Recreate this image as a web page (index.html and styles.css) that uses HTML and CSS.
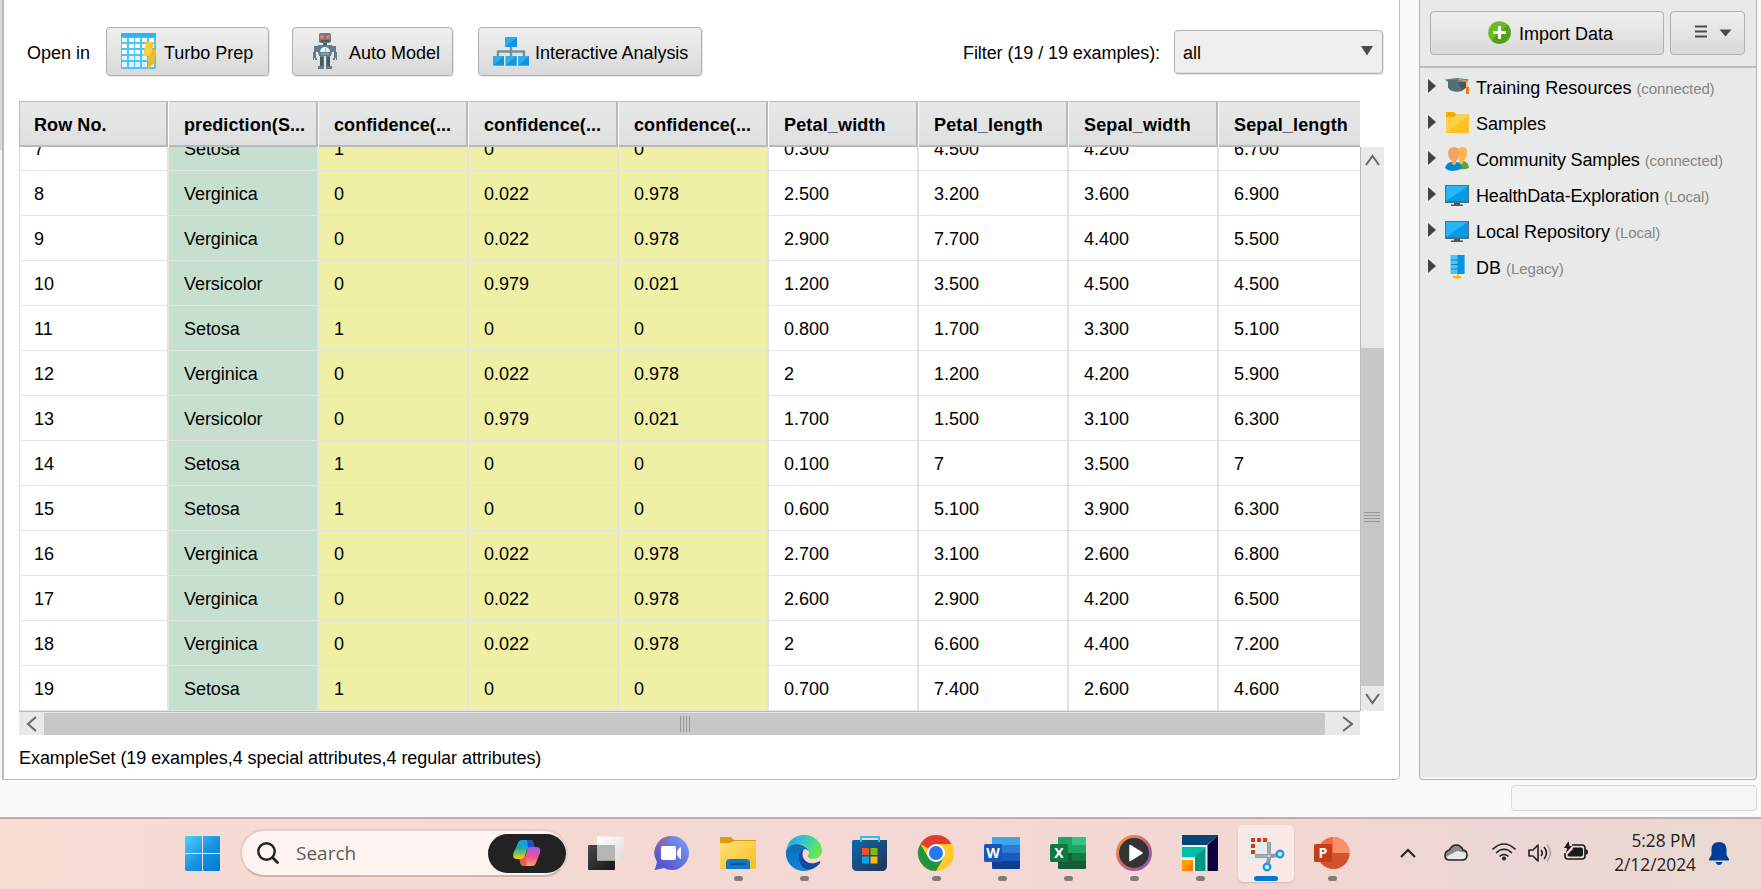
FILE: index.html
```html
<!DOCTYPE html>
<html lang="en">
<head>
<meta charset="utf-8">
<title>ExampleSet</title>
<link rel="stylesheet" href="styles.css">
</head>
<body>
<div class="screen">
  <div class="workspace">
    <div class="edge"><i class="edge-thumb"></i></div>
    <main class="results">
      <div class="toolbar">
        <span class="open-in">Open in</span>
        <button class="btn turbo">
          <svg width="36" height="37" viewBox="0 0 36 37"><rect width="35" height="36" fill="#4fc3f7"/><rect width="35" height="4.500" fill="#29b6f6"/><g fill="#fff"><path d="M1 5h5v4H1zM8 5h5v4H8zM14 5h5v4h-5zM21 5h5v4h-5zM28 5h5v4h-5zM1 11h5v4H1zM8 11h5v4H8zM14 11h5v4h-5zM21 11h5v4h-5zM28 11h5v4h-5zM1 17h5v4H1zM8 17h5v4H8zM14 17h5v4h-5zM21 17h5v4h-5zM28 17h5v4h-5z"/></g><g fill="#e1f5fe"><path d="M1 23h5v4H1zM8 23h5v4H8zM14 23h5v4h-5zM21 23h5v4h-5zM28 23h5v4h-5zM1 29h5v5H1zM8 29h5v5H8zM14 29h5v5h-5zM21 29h5v5h-5zM28 29h5v5h-5z"/></g><path d="M25 9h8l-2 8h4l-2 12h1l-7 7 1-8h-2l2-5h-6z" fill="#fdd02f"/><path d="M31 17h4l-2 12h1l-7 7 1-8h-2z" fill="#fbb11c" opacity=".8"/></svg>
          <span>Turbo Prep</span>
        </button>
        <button class="btn auto">
          <svg width="24" height="37" viewBox="0 0 24 37"><g fill="#607d8b"><rect x="6" y="0" width="12" height="10" rx="2"/><rect x="10" y="9" width="4" height="4"/><path d="M5 12h14l1 3-2 8H6L4 15z"/><path d="M1 13h4v6H1zM19 13h4v6h-4zM0 19h3v6H0zM21 19h3v6h-3zM0 25h1v2H0zM2 25h2v2H2zM20 25h2v2h-2zM23 25h1v2h-1z"/><path d="M7 23h4v10H7zM13 23h4v10h-4zM5 33h6v3H5zM13 33h6v3h-6z"/></g><path d="M7 24h3v9H7zM14 24h3v9h-3zM10 10h4v2h-4z" fill="#455a64"/><circle cx="9" cy="4" r="2.200" fill="#ff7043"/><circle cx="15" cy="4" r="2.200" fill="#ff7043"/><path d="M8 8h8" stroke="#37474f" stroke-width="1.200"/><path d="M7 19a5 5 0 0 1 10 0z" fill="#e1f5fe"/><path d="M12 19l1-4" stroke="#ffa000"/><path d="M8 21h8" stroke="#b0bec5"/></svg>
          <span>Auto Model</span>
        </button>
        <button class="btn inter">
          <svg width="36" height="29" viewBox="0 0 36 29"><path d="M18 9v10M5 19v-4.500h26V19" fill="none" stroke="#78909c" stroke-width="2.400"/><g fill="#29b0ec"><path d="M12 0h12v10H12zM0 19h11v9.500H0zM12.500 19h11v9.500h-11zM25 19h11v9.500H25z"/></g><g fill="#1593dc"><path d="M24 0v10H12zM11 19v9.500H0zM23.500 19v9.500h-11zM36 19v9.500H25z"/></g></svg>
          <span>Interactive Analysis</span>
        </button>
        <span class="filter-label">Filter (19 / 19 examples):</span>
        <div class="select"><span>all</span><svg width="12" height="10" viewBox="0 0 12 10"><path d="M0 0h12L6 9.500z" fill="#4a4a4a"/></svg></div>
      </div>
      <div class="grid">
        <table class="head"><tr><th>Row No.</th><th>prediction(S...</th><th>confidence(...</th><th>confidence(...</th><th>confidence(...</th><th>Petal_width</th><th>Petal_length</th><th>Sepal_width</th><th>Sepal_length</th></tr></table>
        <div class="viewport">
          <table class="rows">
            <tr><td>7</td><td>Setosa</td><td>1</td><td>0</td><td>0</td><td>0.300</td><td>4.500</td><td>4.200</td><td>6.700</td></tr>
            <tr><td>8</td><td>Verginica</td><td>0</td><td>0.022</td><td>0.978</td><td>2.500</td><td>3.200</td><td>3.600</td><td>6.900</td></tr>
            <tr><td>9</td><td>Verginica</td><td>0</td><td>0.022</td><td>0.978</td><td>2.900</td><td>7.700</td><td>4.400</td><td>5.500</td></tr>
            <tr><td>10</td><td>Versicolor</td><td>0</td><td>0.979</td><td>0.021</td><td>1.200</td><td>3.500</td><td>4.500</td><td>4.500</td></tr>
            <tr><td>11</td><td>Setosa</td><td>1</td><td>0</td><td>0</td><td>0.800</td><td>1.700</td><td>3.300</td><td>5.100</td></tr>
            <tr><td>12</td><td>Verginica</td><td>0</td><td>0.022</td><td>0.978</td><td>2</td><td>1.200</td><td>4.200</td><td>5.900</td></tr>
            <tr><td>13</td><td>Versicolor</td><td>0</td><td>0.979</td><td>0.021</td><td>1.700</td><td>1.500</td><td>3.100</td><td>6.300</td></tr>
            <tr><td>14</td><td>Setosa</td><td>1</td><td>0</td><td>0</td><td>0.100</td><td>7</td><td>3.500</td><td>7</td></tr>
            <tr><td>15</td><td>Setosa</td><td>1</td><td>0</td><td>0</td><td>0.600</td><td>5.100</td><td>3.900</td><td>6.300</td></tr>
            <tr><td>16</td><td>Verginica</td><td>0</td><td>0.022</td><td>0.978</td><td>2.700</td><td>3.100</td><td>2.600</td><td>6.800</td></tr>
            <tr><td>17</td><td>Verginica</td><td>0</td><td>0.022</td><td>0.978</td><td>2.600</td><td>2.900</td><td>4.200</td><td>6.500</td></tr>
            <tr><td>18</td><td>Verginica</td><td>0</td><td>0.022</td><td>0.978</td><td>2</td><td>6.600</td><td>4.400</td><td>7.200</td></tr>
            <tr><td>19</td><td>Setosa</td><td>1</td><td>0</td><td>0</td><td>0.700</td><td>7.400</td><td>2.600</td><td>4.600</td></tr>
          </table>
        </div>
        <div class="vscroll">
          <svg width="23" height="25" viewBox="0 0 23 25"><path d="M5 18l6.500-9 6.500 9" fill="none" stroke="#666" stroke-width="2"/></svg>
          <div class="vthumb"><i></i><i></i><i></i><i></i></div>
          <svg width="23" height="25" viewBox="0 0 23 25"><path d="M5 8l6.500 9L18 8" fill="none" stroke="#666" stroke-width="2"/></svg>
        </div>
        <div class="hscroll">
          <svg width="25" height="22" viewBox="0 0 25 22"><path d="M17 4L9 11l8 7" fill="none" stroke="#666" stroke-width="2"/></svg>
          <div class="hthumb"><i></i><i></i><i></i><i></i></div>
          <svg width="35" height="22" viewBox="0 0 35 22"><path d="M18 4l9 7-9 7" fill="none" stroke="#666" stroke-width="2"/></svg>
        </div>
      </div>
      <div class="summary">ExampleSet (19 examples,4 special attributes,4 regular attributes)</div>
    </main>
    <aside class="repo">
      <div class="repo-tools">
        <button class="btn import">
          <svg width="23" height="23" viewBox="0 0 23 23"><circle cx="11.500" cy="11.500" r="11.300" fill="#68bb20"/><path d="M19.500 3.500a11.300 11.300 0 0 1-16 16z" fill="#4fa318"/><path d="M11.500 5v13M5 11.500h13" stroke="#fff" stroke-width="3"/></svg>
          <span>Import Data</span>
        </button>
        <button class="btn menu">
          <svg width="37" height="13" viewBox="0 0 37 13"><path d="M0 1.500h12M0 6.500h12M0 11.500h12" stroke="#4a4a4a" stroke-width="2"/><path d="M24.500 4.500h12l-6 7z" fill="#4a4a4a"/></svg>
        </button>
      </div>
      <ul class="tree">
        <li><b></b><svg width="24" height="24" viewBox="0 0 24 24"><path d="M0 4.500L12 3l12 1.500-2 2H2z" fill="#607d8b"/><path d="M3 6.500h18v6q-3 4-9 4t-9-4z" fill="#455a64"/><path d="M3 5h9l5 11q-12 2-14-4z" fill="#546e7a"/><path d="M14 4.500l8 1.500v7" fill="none" stroke="#f0a050" stroke-width="1.200"/><path d="M21 12h3v7h-3z" fill="#f57c00"/></svg><span>Training Resources</span><em>(connected)</em></li>
        <li><b></b><svg width="24" height="24" viewBox="0 0 24 24"><path d="M1 1h8l2 2.500h13V8H1z" fill="#ffa800"/><path d="M1 6h8l2-2h13v18H1z" fill="#ffca28"/><path d="M24 4v18H1z" fill="#ffc31f"/><path d="M1 22L24 4H11L9 6H1z" fill="#ffd149"/></svg><span>Samples</span></li>
        <li><b></b><svg width="24" height="24" viewBox="0 0 24 24"><path d="M9 22q0-6 6-7l3-1q6 1 6 7-4 2-12 1z" fill="#689f38"/><path d="M12 3q2-3 6-3 5 0 4 8-1 5-4 6v3h-3z" fill="#ffb74d"/><path d="M0 21q1-5 6-6h5q5 1 6 6-4 3-9 3t-8-3z" fill="#0288d1"/><path d="M3 6q0-6 6-6t5 7q0 5-3 7v3q-2 2-4 0v-3Q3 11 3 6z" fill="#f4a460"/></svg><span class="tight">Community Samples</span><em>(connected)</em></li>
        <li><b></b><svg width="24" height="24" viewBox="0 0 24 24"><path d="M0 2h24v18H0z" fill="#546e7a"/><path d="M1 3h22v15H1z" fill="#039be5"/><path d="M1 3h22L1 18z" fill="#29b6f6"/><path d="M9 20h6v1.500h3V23H6v-1.500h3z" fill="#455a64"/></svg><span class="tight">HealthData-Exploration</span><em>(Local)</em></li>
        <li><b></b><svg width="24" height="24" viewBox="0 0 24 24"><path d="M0 2h24v18H0z" fill="#546e7a"/><path d="M1 3h22v15H1z" fill="#039be5"/><path d="M1 3h22L1 18z" fill="#29b6f6"/><path d="M9 20h6v1.500h3V23H6v-1.500h3z" fill="#455a64"/></svg><span>Local Repository</span><em>(Local)</em></li>
        <li><b></b><svg width="24" height="24" viewBox="0 0 24 24"><path d="M5.500 0h14v19h-14z" fill="#4fc3f7"/><path d="M12.500 0h7v19h-7z" fill="#0595e2"/><path d="M6 5h7M6 9.500h7M6 14h7" stroke="#0288d1"/><path d="M12 19h1.500v2H17l-2 2.500h-4.500L7.500 22v-1H12z" fill="#ffb300"/></svg><span>DB</span><em>(Legacy)</em></li>
      </ul>
    </aside>
  </div>
  <div class="statusbar"><div class="status-box"></div></div>

  <footer class="taskbar">
    <svg class="start" width="35" height="35" viewBox="0 0 35 35"><defs><linearGradient id="win" x1="0" y1="0" x2="35" y2="35" gradientUnits="userSpaceOnUse"><stop stop-color="#4dd0ff"/><stop offset=".5" stop-color="#1a95e0"/><stop offset="1" stop-color="#0078d4"/></linearGradient></defs><path d="M1 0h16v17H0V1zM18 0h16l1 1v16H18zM0 18h17v17H1l-1-1zM18 18h17v16l-1 1H18z" fill="url(#win)"/></svg>
    <div class="search">
      <svg width="22" height="22" viewBox="0 0 22 22"><circle cx="9.500" cy="9.500" r="8.200" fill="none" stroke="#222" stroke-width="2.400"/><path d="M15.500 15.500l5 5" stroke="#222" stroke-width="2.800" stroke-linecap="round"/></svg>
      <span>Search</span>
      <div class="copilot"><svg width="28" height="26" viewBox="0 0 28 26"><defs><linearGradient id="cpa" x1="0" y1="0" x2="0" y2="1"><stop stop-color="#159cf0"/><stop offset=".4" stop-color="#1aa5b8"/><stop offset=".75" stop-color="#8dc63f"/><stop offset="1" stop-color="#ffd000"/></linearGradient><linearGradient id="cpb" x1="0" y1="0" x2="0" y2="1"><stop stop-color="#9b5cf6"/><stop offset=".5" stop-color="#ee5090"/><stop offset="1" stop-color="#ffa35c"/></linearGradient></defs><path d="M9 0h8q3 0 3.500 3l1 4h-3q-4 0-5 4l-2 6q-.700 2-3 2H4q-5 0-3.500-6L5 3q1-3 4-3z" fill="url(#cpa)"/><path d="M14 0h3q3 0 3.500 3l1 4h-3q-2 0-3.500 1z" fill="#1d4fd8"/><path d="M19 26h-8q-3 0-3.500-3l-1-4h2q3 0 4-4l2-6q.700-2 3-2h6q5 0 3.500 6L23 23q-1 3-4 3z" fill="url(#cpb)"/><path d="M14 26h-3q-3 0-3.500-3l-1-4h2q2 0 3.500-2z" fill="#f4584a"/></svg></div>
    </div>
    <nav class="apps">
      <div class="app"><svg width="40" height="40" viewBox="0 0 40 40"><defs><linearGradient id="tk" x1="0" y1="0" x2="1" y2="1"><stop stop-color="#484848"/><stop offset="1" stop-color="#151515"/></linearGradient><linearGradient id="tw" x1="0" y1="0" x2="1" y2="1"><stop stop-color="#fff"/><stop offset="1" stop-color="#dcdcdc"/></linearGradient></defs><rect x="2" y="12" width="27" height="25" rx="1" fill="url(#tk)"/><rect x="11" y="3.500" width="27" height="24" rx="1" fill="url(#tw)"/><path d="M11 12h18v15.500H11z" fill="#b5b5b5"/></svg></div>
      <div class="app"><svg width="40" height="40" viewBox="0 0 40 40"><defs><linearGradient id="ch" x1="0" y1="1" x2="1" y2="0"><stop offset=".2" stop-color="#5558cc"/><stop offset="1" stop-color="#7ea0f5"/></linearGradient><linearGradient id="cv" x1="0" y1="0" x2="0" y2="1"><stop stop-color="#9c6ba8"/><stop offset="1" stop-color="#5558cc" stop-opacity="0"/></linearGradient></defs><path d="M19 3a17 17 0 1 1-7 32l-9 2q-1 0 0-1l2-7A17 17 0 0 1 19 3z" fill="url(#ch)"/><path d="M19 3a17 17 0 0 0-14 26q8-15 14-26z" fill="url(#cv)"/><rect x="9" y="13" width="15" height="14" rx="2" fill="#fff"/><path d="M29 14v12q-4-2-4-6t4-6z" fill="#fff"/></svg></div>
      <div class="app open"><svg width="40" height="40" viewBox="0 0 40 40"><defs><linearGradient id="fo" x1="0" y1="0" x2="1" y2="1"><stop stop-color="#ffe27a"/><stop offset="1" stop-color="#fdbb1e"/></linearGradient></defs><path d="M2 5q0-1 1-1h10l3 3h21q1 0 1 1v6H2z" fill="#dd9a0c"/><path d="M2 10h10l4-2h22v28H2z" fill="url(#fo)"/><path d="M8 36V30q0-4 4-4h16q4 0 4 4v6z" fill="#0f77cc"/><path d="M13 31h14" stroke="#0a4f94" stroke-width="2" stroke-linecap="round"/></svg></div>
      <div class="app open"><svg width="40" height="40" viewBox="0 0 40 40"><defs><linearGradient id="e1" x1="0" y1="0" x2="1" y2=".4"><stop stop-color="#1ba0e8"/><stop offset=".45" stop-color="#2cc3d2"/><stop offset="1" stop-color="#68e650"/></linearGradient><linearGradient id="e2" x1="0" y1="0" x2="0" y2="1"><stop stop-color="#0c6db5"/><stop offset="1" stop-color="#1184dc"/></linearGradient></defs><path d="M2 18C4 7 11 2 20 2c11 0 18 8 18 15 0 6-4 9-9 9-4 0-5-1-5-3s1-2 1-4c0-3-4-8-11-8S3 14 2 18z" fill="url(#e1)"/><path d="M2 18q2-6 10-7c8 0 13 5 13 8-1-4-9-4-9 4 0 8 7 14 15 11l-4 2q-3 2-7 2C9 38 1 29 2 18z" fill="url(#e2)"/><path d="M20 16c-7 3-7 14 1 20 6 3 13-3 15-6 1-2-1-2-2-1-11 5-19-5-14-13z" fill="#0d4d99"/></svg></div>
      <div class="app"><svg width="40" height="40" viewBox="0 0 40 40"><defs><linearGradient id="st" x1="0" y1="0" x2="1" y2="1"><stop stop-color="#0b69ad"/><stop offset="1" stop-color="#272f55"/></linearGradient></defs><path d="M11 10V4h18v6" fill="none" stroke="#28c0f0" stroke-width="2"/><path d="M3 7h34v26q0 5-5 5H7q-5 0-5-5V8z" fill="url(#st)"/><path d="M11 9V4h18v5" fill="none" stroke="#28c0f0" stroke-width="2"/><path d="M12 15h7v7h-7z" fill="#f25022"/><path d="M20.500 15h7v7h-7z" fill="#7fba00"/><path d="M12 23.500h7v7h-7z" fill="#00a4ef"/><path d="M20.500 23.500h7v7h-7z" fill="#ffb900"/></svg></div>
      <div class="app open"><svg width="40" height="40" viewBox="0 0 40 40"><circle cx="20" cy="20" r="18" fill="#ffc928"/><path d="M4.400 11A18 18 0 0 1 35.600 11H20v9z" fill="#e33b2e"/><path d="M4.400 11A18 18 0 0 0 20 38l7.800-13.500L20 20l-7.800 4.500z" fill="#229342"/><circle cx="20" cy="20" r="9" fill="#fff"/><circle cx="20" cy="20" r="7" fill="#2878ec"/></svg></div>
      <div class="app open"><svg width="40" height="40" viewBox="0 0 40 40"><path d="M10 5q0-1 1-1h26q1 0 1 1v7H10z" fill="#41a5ee"/><path d="M10 12h28v8H10z" fill="#2b7cd3"/><path d="M10 20h28v8H10z" fill="#185abd"/><path d="M10 28h28v7q0 1-1 1H11q-1 0-1-1z" fill="#103f91"/><rect x="2" y="11" width="18" height="18" rx="1.500" fill="#1c55b8"/><text x="11" y="25" text-anchor="middle" class="glyph">W</text></svg></div>
      <div class="app open"><svg width="40" height="40" viewBox="0 0 40 40"><path d="M10 5q0-1 1-1h13v16H10z" fill="#21a366"/><path d="M24 4h13q1 0 1 1v7H24z" fill="#33c481"/><path d="M24 12h14v8H24z" fill="#21a366"/><path d="M10 20h14v8H10z" fill="#185c37"/><path d="M24 20h14v8H24z" fill="#107c41"/><path d="M10 28h28v7q0 1-1 1H11q-1 0-1-1z" fill="#185c37"/><rect x="2" y="11" width="18" height="18" rx="1.500" fill="#107840"/><text x="11" y="25" text-anchor="middle" class="glyph">X</text></svg></div>
      <div class="app open"><svg width="40" height="40" viewBox="0 0 40 40"><defs><linearGradient id="mp" x1="0" y1="0" x2="1" y2="1"><stop stop-color="#ff9a3c"/><stop offset=".5" stop-color="#c9686f"/><stop offset="1" stop-color="#8050d0"/></linearGradient></defs><circle cx="20" cy="20" r="18" fill="url(#mp)"/><circle cx="20" cy="20" r="15" fill="#333"/><path d="M16 12.500l12 7.500-12 7.500z" fill="#fff" stroke="#fff" stroke-width="1.500" stroke-linejoin="round"/></svg></div>
      <div class="app open"><svg width="40" height="40" viewBox="0 0 40 40"><path d="M2 2h36v36H2z" fill="#dff5f0"/><path d="M2 2h36L27 12H2z" fill="#034578"/><path d="M38 2v36H27.500V12z" fill="#0f0240"/><path d="M2 14h23l-9 10H2z" fill="#00bfa5"/><path d="M25.500 14v24H15V24z" fill="#009984"/><path d="M2 27h11v11H2z" fill="#ffa000"/><path d="M13 27v11H2z" fill="#ff8500"/></svg></div>
      <div class="app open current"><svg width="40" height="40" viewBox="0 0 40 40"><path d="M2 2h23v26H2z" fill="#e6ebf0"/><g fill="#d83b01"><path d="M5 5h4v4H5zM11 5h4v4h-4zM17 5h4v4h-4zM5 11h4v4H5zM5 17h4v4H5z"/></g><path d="M23 9v17l-1.500 5M9 23h17l5-1" fill="none" stroke="#9299a2" stroke-width="4"/><path d="M23 9v14H9" fill="none" stroke="#b9bec5" stroke-width="1"/><circle cx="23" cy="23" r="1.300" fill="#d5d8dc"/><circle cx="34" cy="21" r="3.300" fill="#f9eae8" stroke="#1e9de6" stroke-width="2.400"/><circle cx="21" cy="34" r="3.300" fill="#f9eae8" stroke="#1e9de6" stroke-width="2.400"/></svg></div>
      <div class="app open"><svg width="40" height="40" viewBox="0 0 40 40"><circle cx="21.500" cy="20" r="16" fill="#ed6c47"/><path d="M21 4a16 16 0 0 1 16.500 16H21z" fill="#ff8f6b"/><path d="M5.500 20h32a16 16 0 0 1-32 0z" fill="#d35230"/><rect x="2" y="11" width="18" height="18" rx="1.500" fill="#c43e1c"/><text x="11" y="25" text-anchor="middle" class="glyph">P</text></svg></div>
    </nav>
    <div class="tray">
      <svg class="t-chev" width="16" height="10" viewBox="0 0 16 10"><path d="M1 9l7-7 7 7" fill="none" stroke="#222" stroke-width="2"/></svg>
      <svg class="t-cloud" width="24" height="17" viewBox="0 0 24 17"><path d="M5.500 16Q1 16 1 11.500 1 7 5.500 6 8 1 12.500 1 17 1 19 6q4 .500 4 5t-4 5z" fill="#e8e8e8"/><path d="M5.500 6Q8 1 12.500 1 17 1 19 6l3.500 3L13 7 2 13Q0 7 5.500 6z" fill="#8c8c8c"/><path d="M5.500 16Q1 16 1 11.500 1 7 5.500 6 8 1 12.500 1 17 1 19 6q4 .500 4 5t-4 5z" fill="none" stroke="#222" stroke-width="1.600"/></svg>
      <svg class="t-wifi" width="24" height="18" viewBox="0 0 24 18"><g fill="none" stroke="#222" stroke-width="1.600"><path d="M.500 6.500q11.500-11 23 0M4 10q8-7.500 16 0M7.500 13.500q4.500-4 9 0"/></g><circle cx="12" cy="15.500" r="2" fill="#222"/></svg>
      <svg class="t-vol" width="24" height="20" viewBox="0 0 24 20"><path d="M1 7h4l5-5v16l-5-5H1z" fill="none" stroke="#222" stroke-width="1.600" stroke-linejoin="round"/><path d="M13 7q2.500 3 0 6M16 4q5 6 0 12" fill="none" stroke="#222" stroke-width="1.600"/><path d="M19 1.500q7 8.500 0 17" fill="none" stroke="#aaa0a0" stroke-width="1.400"/></svg>
      <svg class="t-bat" width="24" height="20" viewBox="0 0 24 20"><path d="M8 4h10q3 0 3 3v8q0 3-3 3H4q-3 0-3-3v-3" fill="none" stroke="#1a1a1a" stroke-width="1.600"/><path d="M9 6.500h8q2 0 2 2v5q0 2-2 2H5q-1.500 0-1.500-2l5-5z" fill="#1a1a1a"/><path d="M21.500 8.500h1q1.500 0 1.500 2.500t-1.500 2.500h-1z" fill="#1a1a1a"/><path d="M4.500 0L0 7h3l-1 5 6-7H5.500z" fill="#1a1a1a"/></svg>
      <div class="clock"><div>5:28 PM</div><div>2/12/2024</div></div>
      <svg class="t-bell" width="20" height="23" viewBox="0 0 20 23"><path d="M10 0q7 0 7.500 7v6L20 17v1.500H0V17l2.500-4V7Q3 0 10 0z" fill="#003f98"/><path d="M6.500 20h7q-1 3-3.500 3t-3.500-3z" fill="#003f98"/></svg>
    </div>
  </footer>
</div>
</body>
</html>
```
FILE: styles.css
```css
* { box-sizing: border-box; }
body { margin: 0; background: #fafafa; color: #000; font: 18px/20px "Liberation Sans", Arial, sans-serif; overflow: hidden; }
svg { display: block; flex: none; }
button { font: inherit; color: inherit; margin: 0; }
.screen { width: 1761px; height: 889px; display: flex; flex-direction: column; }

.workspace { height: 780px; display: flex; }
.edge { width: 2px; background: #f4f4f4; height: 777px; }
.edge-thumb { display: block; height: 150px; background: #d8d8d8; }
.results { width: 1398px; border: solid #bbb; border-width: 0 1px 1px 2px; border-bottom-right-radius: 5px; background: #fff; padding-left: 15px; margin-right: 19px; }

.toolbar { height: 101px; display: flex; align-items: center; padding: 2px 0 0 8px; }
.btn { display: flex; align-items: center; padding: 0; border: 1px solid #b0b0b0; border-radius: 4px; background: linear-gradient(#efefef, #d9d9d9); box-shadow: 1px 1px 0 #e6e6e6; white-space: nowrap; }
.open-in { width: 79px; padding-top: 2px; }
.turbo, .auto, .inter { height: 49px; }
.turbo { width: 163px; padding-left: 14px; gap: 7px; margin-right: 23px; }
.auto { width: 161px; padding-left: 20px; gap: 12px; margin-right: 25px; }
.inter { width: 224px; padding-left: 14px; gap: 6px; }
.btn span { padding-top: 2px; }
.inter span { letter-spacing: -.04px; }
.filter-label { width: 211px; margin-left: 261px; padding-top: 2px; white-space: nowrap; letter-spacing: -.08px; }
.select { width: 209px; height: 44px; border: 1px solid #b3b3b3; border-radius: 4px; background: #efefef; box-shadow: 1px 1px 0 #e6e6e6, inset 0 -1px #e0e0e0; display: flex; align-items: center; justify-content: space-between; padding: 2px 9px 0 8px; }
.select svg { margin-top: -3px; }

.grid { width: 1365px; display: grid; grid-template-columns: 1341px 24px; grid-template-rows: 46px 564px 24px; }
table { table-layout: fixed; border-collapse: separate; border-spacing: 0; width: 1350px; }
.head { grid-column: 1 / 3; width: 1341px; }
th { width: 150px; height: 46px; padding: 2px 0 0 15px; text-align: left; font-weight: bold; letter-spacing: .16px; white-space: nowrap; background: linear-gradient(#e7e9e9, #dedede); box-shadow: inset -1px 0 #fff, inset -3px 0 #b9b9b9, inset 0 1px #b9b9b9, inset 0 -2px #b9b9b9; }
th:nth-child(-n+5) { letter-spacing: .08px; }
th:first-child { box-shadow: inset -1px 0 #fff, inset -3px 0 #b9b9b9, inset 1px 1px #b9b9b9, inset 0 -2px #b9b9b9; }
th:last-child { width: 141px; box-shadow: inset 0 1px #b9b9b9, inset 0 -2px #b9b9b9; }
.viewport { overflow: hidden; height: 564px; width: 1341px; }
.rows { margin-top: -21px; }
td { width: 150px; height: 45px; padding: 2px 0 0 15px; border-right: 2px solid #e3e3e3; border-bottom: 1px solid #e3e3e3; }
td:first-child { border-left: 1px solid #ddd; padding-left: 14px; }
td:nth-child(2) { background: #c7dfce; letter-spacing: -.05px; }
td:nth-child(3), td:nth-child(4), td:nth-child(5) { background: #efefa5; }

.vscroll { width: 24px; border-left: 1px solid #bbb; background: #e8eaea; display: flex; flex-direction: column; }
.vthumb { height: 338px; margin-top: 176px; background: #c6c8c7; display: flex; flex-direction: column; align-items: center; justify-content: center; gap: 2px; }
.vthumb i { width: 16px; height: 1px; background: #979797; margin-right: 1px; }
.hscroll { width: 1341px; border-top: 1px solid #b9b9b9; background: #e8eaea; display: flex; align-items: flex-end; }
.hthumb { width: 1281px; height: 22px; background: #c6c8c7; display: flex; align-items: center; justify-content: center; gap: 2px; }
.hthumb i { width: 1px; height: 16px; background: #979797; }
.summary { padding-top: 13px; letter-spacing: -.06px; }

.repo { width: 338px; border: solid #b5b5b5; border-width: 0 1px 1px; border-radius: 0 0 4px 4px; background: #e8eae9; box-shadow: inset 0 -2px #f6f6f6; }
.repo-tools { height: 68px; padding: 11px 10px 0; display: flex; gap: 6px; border-bottom: 2px solid #bcbcbc; }
.repo-tools .btn { height: 44px; box-shadow: none; }
.import { width: 234px; padding-left: 57px; gap: 8px; }
.import svg { margin-top: -2px; }
.menu { width: 75px; padding-left: 24px; }
.menu svg { margin-top: -3px; }
.tree { list-style: none; margin: 0; padding: 1px 0 0 8px; }
.tree li { height: 36px; display: flex; align-items: center; white-space: nowrap; }
.tree b { width: 0; border: solid transparent; border-width: 7px 0 7px 8px; border-left-color: #444; margin: 0 9px 3px 0; }
.tree svg { margin-right: 7px; }
.tree em { font-style: normal; font-size: 15px; color: #858585; margin-left: 5px; padding-top: 3px; letter-spacing: -.1px; }
.tree span { padding-top: 1px; }
.tight { letter-spacing: -.14px; }

.statusbar { height: 37px; padding: 5px 4px 0 0; display: flex; justify-content: flex-end; }
.status-box { width: 246px; height: 26px; border: 1px solid #d9d9d9; border-radius: 4px; background: #f6f6f6; }

.taskbar { height: 72px; border-top: 2px solid #bfaeab; background: linear-gradient(90deg, #f6dcd3 0, #f3d8d3 55%, #f2d6d2 76%, #ead6d6 86%, #ebd9d1 100%); display: flex; align-items: flex-start; padding-left: 185px; font-family: "Open Sans", "Noto Sans", sans-serif; }
.start { margin: 17px 20px 0 0; }
.search { width: 328px; height: 48px; margin: 10px 5px 0 0; border: 2px solid #e8ccc4; border-bottom-color: #d0b4ae; border-radius: 24px; background: #fdf4f2; display: flex; align-items: center; padding: 0 0 0 15px; }
.search > span { font-size: 19px; color: #5f5a59; margin-left: 17px; width: 193px; }
.copilot { width: 78px; height: 39px; border-radius: 20px; background: #222; display: flex; align-items: center; justify-content: center; }
.apps { display: flex; width: 792px; }
.app { width: 66px; height: 70px; display: flex; flex-direction: column; align-items: center; padding-top: 14px; }
.open::after { content: ""; width: 9px; height: 5px; border-radius: 3px; background: #877b78; margin-top: 3px; }
.current { width: 56px; height: 57px; margin: 6px 5px 0; padding-top: 8px; border-radius: 5px; background: #f9eae8; box-shadow: 0 1px 2px #cdbab6; }
.current::after { width: 24px; background: #0078d7; }
.glyph { font: bold 14px "Open Sans", sans-serif; fill: #fff; }
.tray { display: flex; align-items: flex-start; padding-left: 35px; }
.t-chev { margin: 29px 28px 0 0; }
.t-cloud { margin: 25px 24px 0 0; }
.t-wifi { margin: 24px 12px 0 0; }
.t-vol { margin: 24px 12px 0 0; }
.t-bat { margin: 22px 24px 0 0; }
.clock { width: 84px; text-align: right; font-size: 17.3px; line-height: 24px; color: #222; padding-top: 10px; white-space: nowrap; margin-right: 13px; }
.t-bell { margin-top: 23px; }
```
